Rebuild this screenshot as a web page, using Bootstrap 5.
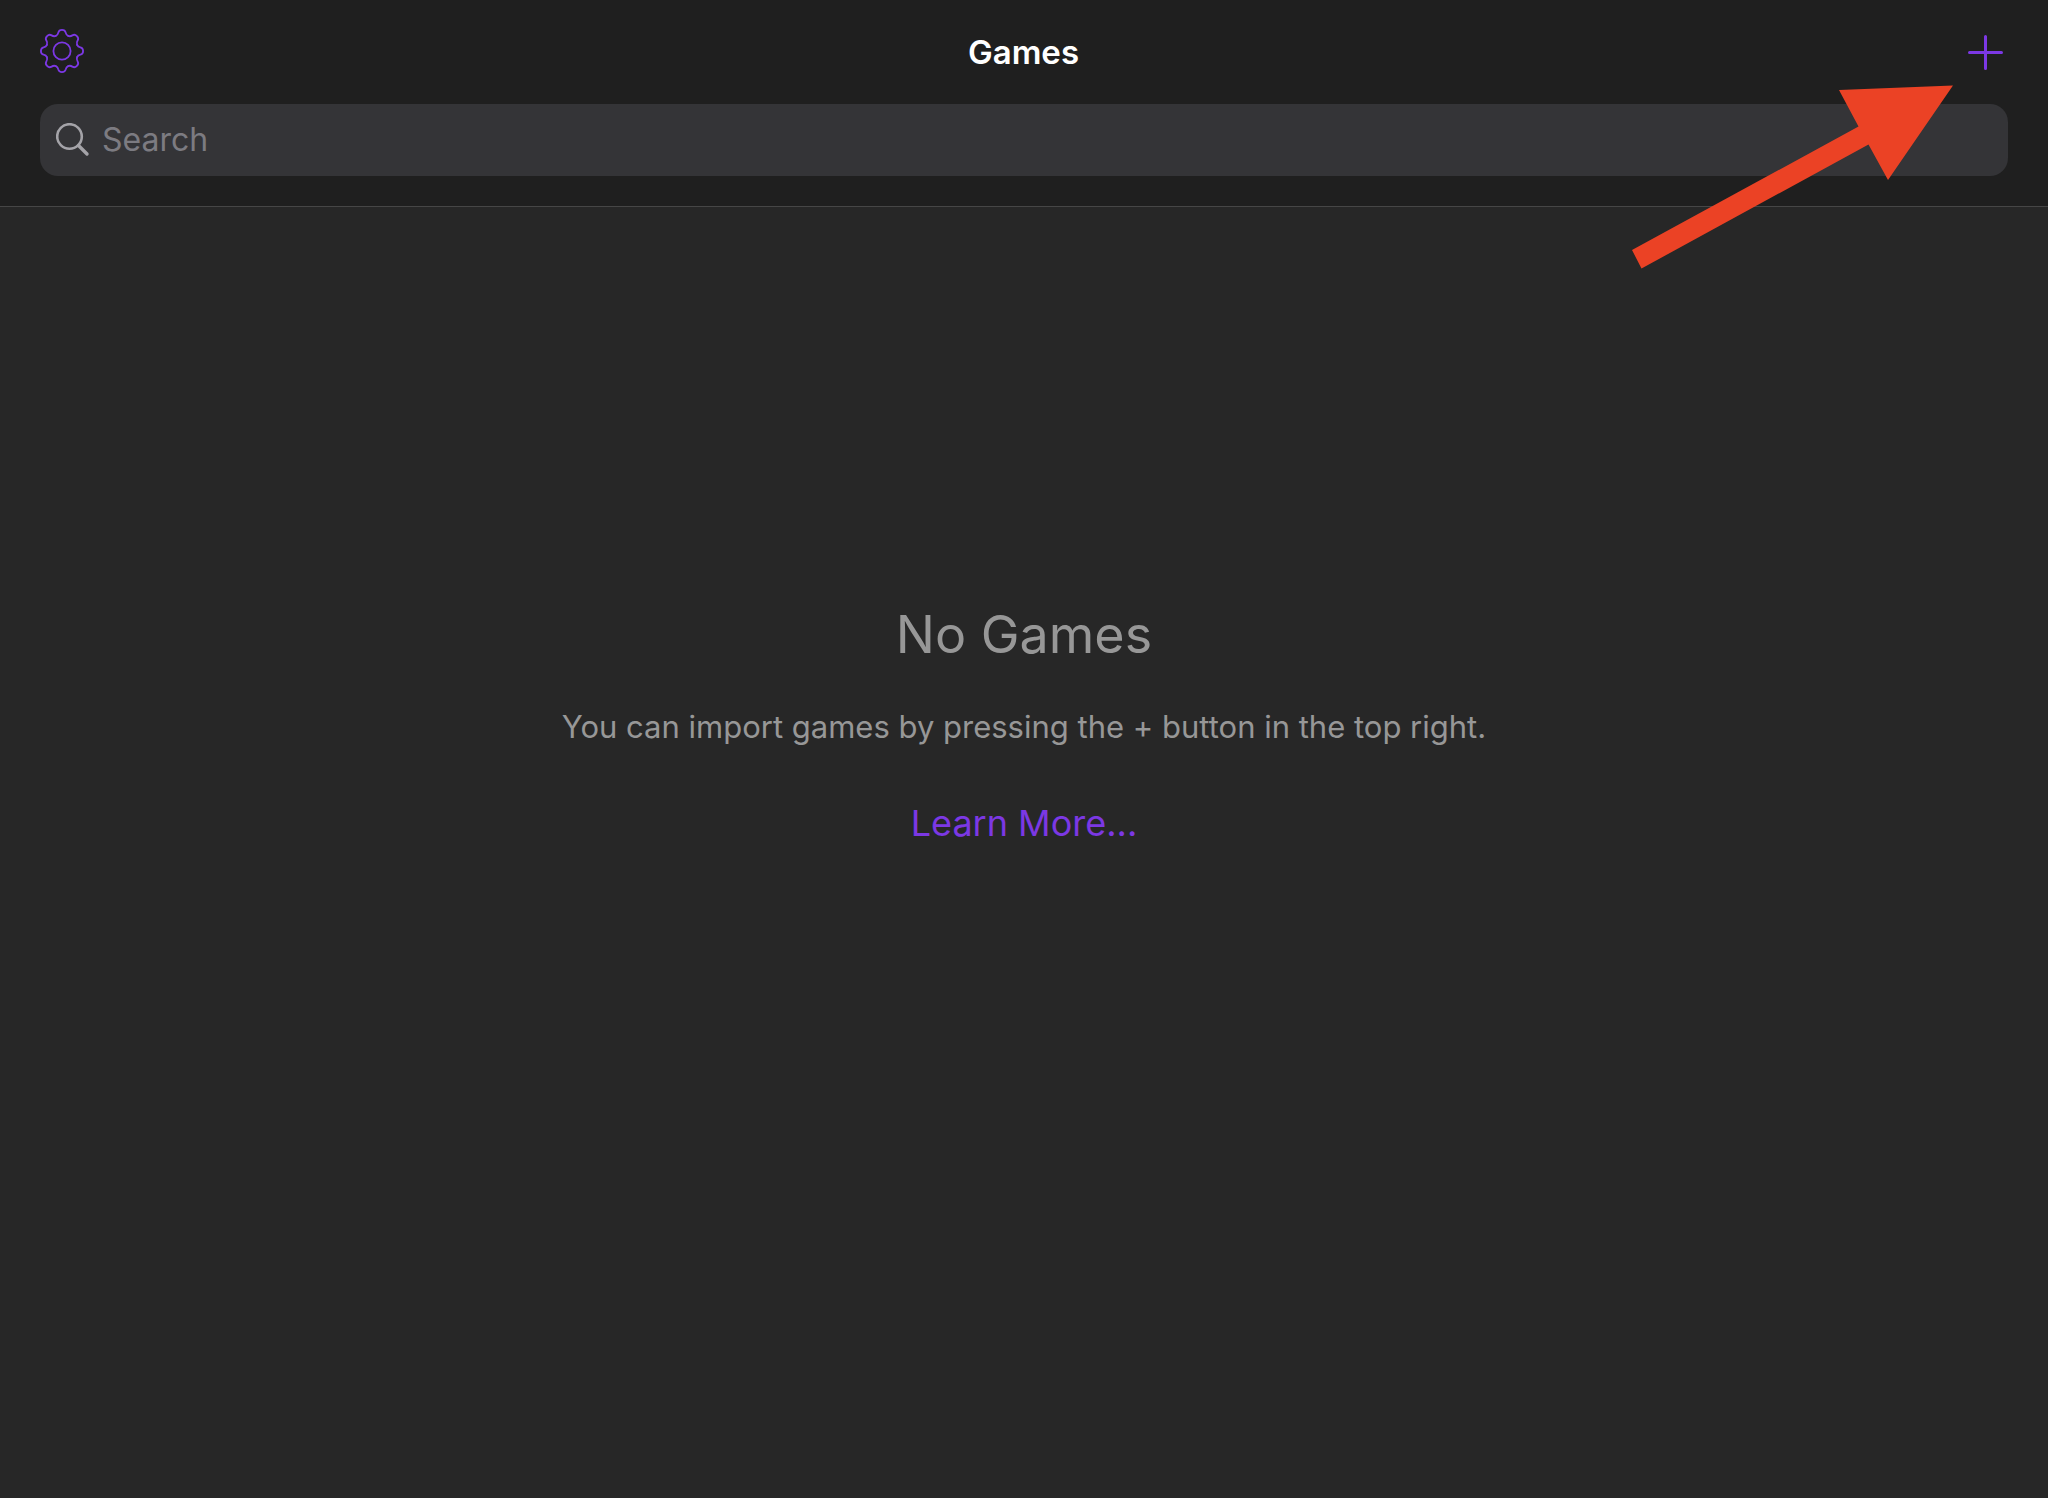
<!DOCTYPE html>
<html lang="en" data-bs-theme="dark">
<head>
<meta charset="utf-8">
<meta name="viewport" content="width=device-width, initial-scale=1">
<title>Games</title>
<link href="https://cdn.jsdelivr.net/npm/bootstrap@5.3.0/dist/css/bootstrap.min.css" rel="stylesheet">
<style>
  body { background: #272727; color: #979797; font-family: Inter, "Liberation Sans", sans-serif; }
  .top-bar { background: #1f1f1f; border-bottom: 1px solid #464646; padding: 0 40px 30px; }
  .title-row { height: 104px; }
  .title-row h1 { font-size: 33px; line-height: 40px; font-weight: 600; color: #fff; }
  .icon-btn { color: #7c38e4; line-height: 0; }
  .search-box { height: 72px; border-radius: 18px; background: #343437; padding: 0 16px; gap: 12px; }
  .search-box input, .search-box input:focus { background: transparent; color: #fff; font-size: 32px; line-height: 40px; box-shadow: none; }
  .search-box input::placeholder { color: #7c7b81; opacity: 1; }
  .empty-state { padding-bottom: 256px; }
  .empty-state h2 { font-size: 52px; line-height: 64px; font-weight: 400; margin-bottom: 40px; color: #979797; }
  .empty-state p { font-size: 31px; line-height: 40px; margin-bottom: 52px; }
  .empty-state a { font-size: 36px; line-height: 48px; color: #7c38e4; }
  .pointer-arrow { top: 85px; right: 95px; pointer-events: none; }
</style>
<script src="https://cdn.jsdelivr.net/npm/bootstrap@5.3.0/dist/js/bootstrap.bundle.min.js"></script>
</head>
<body class="d-flex flex-column min-vh-100 position-relative">
<header class="top-bar">
  <div class="title-row d-flex align-items-center justify-content-between">
    <button type="button" class="icon-btn btn p-0 border-0" aria-label="Settings">
      <svg width="44" height="46" viewBox="-22 -22 44 46" fill="none" stroke="currentColor" stroke-width="1.8" stroke-linecap="round">
        <defs><path id="tooth" d="M-6.2-15.1C-4.3-15.9-4-17-3.7-18.4C-3.2-20.5-1.8-21.1 0-21.1S3.2-20.5 3.7-18.4C4-17 4.3-15.9 6.2-15.1"/></defs>
        <use href="#tooth"/><use href="#tooth" transform="rotate(45)"/><use href="#tooth" transform="rotate(90)"/><use href="#tooth" transform="rotate(135)"/>
        <use href="#tooth" transform="rotate(180)"/><use href="#tooth" transform="rotate(225)"/><use href="#tooth" transform="rotate(270)"/><use href="#tooth" transform="rotate(315)"/>
        <circle r="8.6"/>
      </svg>
    </button>
    <h1 class="m-0">Games</h1>
    <button type="button" class="icon-btn btn p-0 border-0" aria-label="Add game">
      <svg width="45" height="45" viewBox="0 0 45 45" fill="none" stroke="currentColor" stroke-width="3" stroke-linecap="round"><path d="M22.5 6.5v32M6.5 22.5h32"/></svg>
    </button>
  </div>
  <form class="search-box d-flex align-items-center" role="search">
    <label for="game-search" class="lh-1">
      <svg class="d-block" width="34" height="34" viewBox="0 0 34 34" fill="none" stroke="#a4a3a8" stroke-linecap="round" aria-label="Search"><circle cx="13.5" cy="13.5" r="12.3" stroke-width="2.6"/><path d="M22.5 22.5l8.500 8.500" stroke-width="3.4"/></svg>
    </label>
    <input id="game-search" class="form-control border-0 p-0" type="text" placeholder="Search">
  </form>
</header>
<main class="empty-state flex-grow-1 d-flex flex-column align-items-center justify-content-center text-center">
  <h2>No Games</h2>
  <p>You can import games by pressing the + button in the top right.</p>
  <a href="#" class="text-decoration-none">Learn More...</a>
</main>
<svg class="pointer-arrow position-absolute" width="321" height="184" viewBox="0 0 321 184" aria-hidden="true"><path fill="#eb4225" d="M321 .5L207 5l19.500 36.500L0 165l9.500 18.500L236.500 59.500 256 95z"/></svg>
</body>
</html>
